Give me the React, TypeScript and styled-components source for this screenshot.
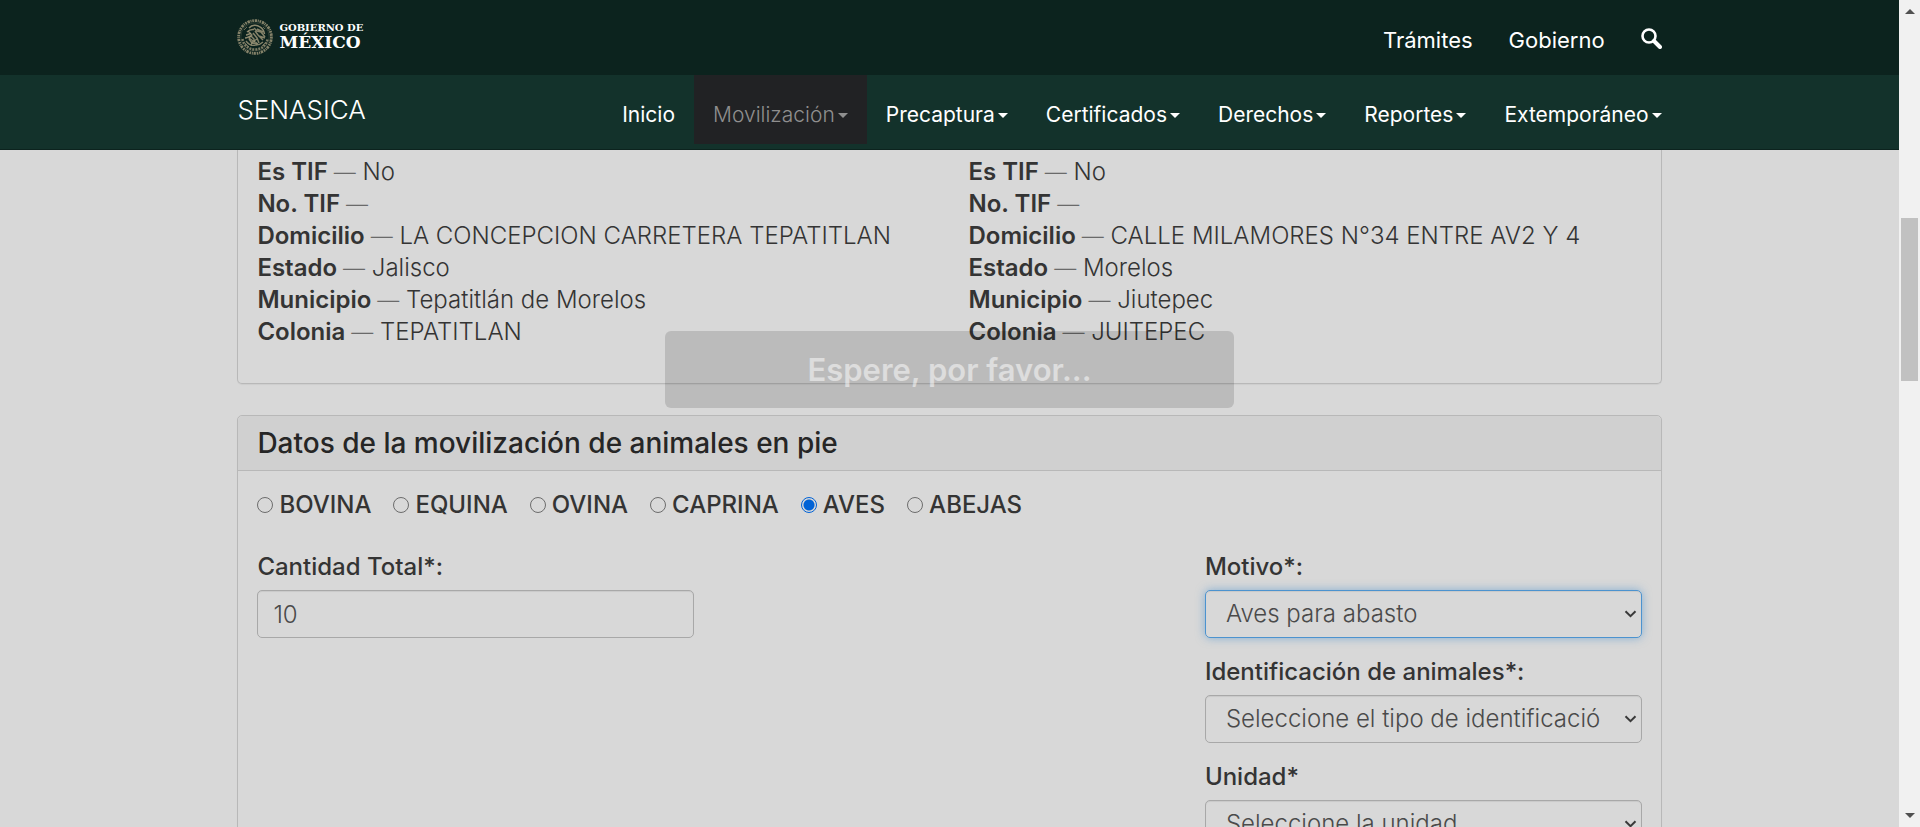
import React from "react";
import styled, { createGlobalStyle } from "styled-components";

const GlobalStyle = createGlobalStyle`
  *, *::before, *::after { box-sizing: border-box; }
  body {
    margin: 0;
    background: #d8d8d8;
    color: #343434;
    font: 300 24px/32px Inter, "Liberation Sans", sans-serif;
  }
`;

const Viewport = styled.div`
  display: flex;
  height: 100vh;
  overflow: hidden;
`;

const Page = styled.div`
  position: relative;
  flex: 1;
  min-width: 0;
  overflow: hidden;
`;

const Container = styled.div`
  width: 75%;
  max-width: 1425px;
  min-width: 1200px;
  margin: 0 auto;
  display: flex;
  justify-content: space-between;
`;

const GovBar = styled.header`
  background: #0c231e;
  height: 75px;
`;

const Brand = styled.a`
  display: flex;
  align-items: center;
  gap: 6px;
  height: 74px;
  color: #fff;
  text-decoration: none;
`;

const Wordmark = styled.span`
  display: flex;
  flex-direction: column;
  font-family: "DejaVu Serif", serif;
  font-weight: 700;
`;

const WordTop = styled.span`
  font-size: 10px;
  line-height: 10px;
`;

const WordBottom = styled.span`
  font-size: 17px;
  line-height: 18px;
`;

const GovLinks = styled.nav`
  display: flex;
  align-items: center;
  gap: 36px;
  height: 80px;
`;

const GovLink = styled.a`
  color: #fff;
  font-size: 22px;
  font-weight: 400;
  text-decoration: none;
`;

const SearchLink = styled.a`
  display: flex;
  color: #fff;
  padding-bottom: 4px;
`;

const NavBar = styled.div`
  background: #13322b;
  height: 75px;
  border-bottom: 1px solid #0c231e;
`;

const SiteName = styled.a`
  color: #fff;
  font-size: 26px;
  line-height: 70px;
  text-decoration: none;
`;

const Menu = styled.nav`
  display: flex;
  margin-right: -19px;
`;

const MenuLink = styled.a<{ $active?: boolean }>`
  display: flex;
  align-items: center;
  gap: 3px;
  height: 69px;
  padding: 11px 19px 0;
  background: ${(p) => (p.$active ? "#212224" : "transparent")};
  color: ${(p) => (p.$active ? "#8f8f8f" : "#fff")};
  font-size: 21px;
  font-weight: ${(p) => (p.$active ? 300 : 400)};
  text-decoration: none;
`;

const Caret = styled.span`
  border: 5px solid transparent;
  border-top-color: currentColor;
  border-bottom: 0;
`;

const Content = styled.main`
  width: 75%;
  max-width: 1425px;
  min-width: 1200px;
  margin: 0 auto;
  display: flex;
  flex-direction: column;
  gap: 31px;
`;

const Panel = styled.section<{ $continued?: boolean }>`
  border: 1px solid #b8b8b8;
  border-top-width: ${(p) => (p.$continued ? 0 : 1)}px;
  border-radius: ${(p) => (p.$continued ? "0 0 5px 5px" : "5px")};
  box-shadow: 0 1px 1px rgba(0, 0, 0, 0.05);
`;

const Columns = styled.div`
  display: grid;
  grid-template-columns: 1fr 1fr;
  gap: 38px;
  padding: 6px 19px 35px;
`;

const Details = styled.dl`
  margin: 0;
`;

const Detail = styled.div`
  display: flex;
  gap: 6px;
  white-space: nowrap;
`;

const Term = styled.dt`
  font-weight: 600;
`;

const Value = styled.dd`
  margin: 0;
`;

const Dash = styled.span`
  color: #6a6a6a;
  font-size: 22px;
`;

const PanelHeading = styled.h2`
  margin: 0;
  padding: 11px 19px;
  background: #d0d0d0;
  border-bottom: 1px solid #b8b8b8;
  border-radius: 5px 5px 0 0;
  color: #262626;
  font-size: 28px;
  font-weight: 500;
  line-height: 32px;
`;

const PanelBody = styled.form`
  padding: 18px 19px;
`;

const RadioRow = styled.div`
  display: flex;
  gap: 22px;
  margin-bottom: 30px;
`;

const RadioLabel = styled.label`
  display: flex;
  align-items: center;
  gap: 6px;
  font-weight: 500;
`;

const Radio = styled.input`
  appearance: none;
  width: 16px;
  height: 16px;
  margin: 0;
  border: 1px solid #6c6c6c;
  border-radius: 50%;
  &:checked {
    border-color: #0062d6;
    background: radial-gradient(circle, #0062d6 0 5px, transparent 6px);
  }
`;

const FieldGrid = styled.div`
  display: grid;
  grid-template-columns: repeat(3, 1fr);
  column-gap: 37px;
`;

const FieldColumn = styled.div<{ $column: number }>`
  grid-column: ${(p) => p.$column};
  display: flex;
  flex-direction: column;
  gap: 18px;
`;

const Field = styled.div`
  display: flex;
  flex-direction: column;
  gap: 7px;
`;

const FieldLabel = styled.label`
  font-weight: 500;
`;

const controlStyles = `
  width: 100%;
  height: 48px;
  border: 1px solid #a8a8a8;
  border-radius: 5px;
  background: transparent;
  box-shadow: inset 0 1px 1px rgba(0, 0, 0, 0.07);
  color: #4a4a4a;
  font: inherit;
  outline: none;
`;

const TextInput = styled.input`
  ${controlStyles}
  padding: 0 15px;
`;

const SelectWrap = styled.div`
  display: grid;
  align-items: center;
  > * { grid-area: 1 / 1; }
`;

const Select = styled.select<{ $focused?: boolean }>`
  ${controlStyles}
  appearance: none;
  padding: 0 40px 0 20px;
  ${(p) =>
    p.$focused &&
    `border-color: #4c93cf;
     box-shadow: inset 0 1px 1px rgba(0, 0, 0, 0.07), 0 0 10px rgba(76, 147, 207, 0.6);`}
`;

const Chevron = styled.svg`
  justify-self: end;
  margin-right: 5px;
  pointer-events: none;
`;

const Notice = styled.div`
  position: absolute;
  top: 40%;
  left: 35%;
  width: 30%;
  padding: 22px;
  border-radius: 6px;
  background: rgba(0, 0, 0, 0.134);
  color: rgba(255, 255, 255, 0.5);
  font-size: 31px;
  font-weight: 600;
  line-height: 33px;
  text-align: center;
`;

const ScrollTrack = styled.div`
  display: flex;
  flex-direction: column;
  width: 21px;
  padding: 9px 2px;
  background: #f1f1f1;
`;

const ScrollArrow = styled.span<{ $down?: boolean }>`
  align-self: center;
  border: 5px solid transparent;
  ${(p) =>
    p.$down
      ? "border-top-color: #505050; border-bottom: 0;"
      : "border-bottom-color: #505050; border-top: 0;"}
`;

const ScrollSpace = styled.span<{ $grow: number }>`
  flex: ${(p) => p.$grow} 1 0;
`;

const ScrollThumb = styled.span`
  flex: 163 1 0;
  background: #c1c1c1;
`;

const Seal = () => (
  <svg width="36" height="36" viewBox="0 0 36 36" fill="none" stroke="#a39a7c" aria-hidden="true">
    <circle cx="18" cy="18" r="16.4" strokeWidth="2.8" strokeDasharray="1.6 .9 2.4 .7 1 .8" opacity=".8" />
    <circle cx="18" cy="18" r="14.2" strokeWidth=".5" opacity=".4" />
    <path d="M5.5 20c1 6 6 10.500 12.500 10.500S29.500 26 30.500 20" strokeWidth="2.4" strokeDasharray="2 1" opacity=".75" />
    <path d="M12 9c3-3.500 8-3.500 11-1 3 1.500 4 4 4.500 7M10 13c2-2 4-3 7-2.500M9 16c2 0 3-1.500 5-1.500M8 19c3 0 4-2 6-2" strokeWidth="1.500" opacity=".85" />
    <path d="M17 9l3 3 4 1 4 5M18 12l3 4 5 5M16 14l4 5 2 5M14 17l3 3v5M20 10l6 3M22 17l6 2M12 20l3 4 5 1" strokeWidth="1.500" opacity=".8" />
    <path d="M9 22c3 4 7 5 10 4 3 0 5-1 7-3M11 12l4 4-3 3 4 3-2 4M20 20l-3 2 4 3" strokeWidth="1.300" opacity=".8" />
    <path d="M7 11l3-3M26 8l2 2M8 24l4 4M25 27l3-3" strokeWidth="1" opacity=".6" />
  </svg>
);

const SearchIcon = () => (
  <svg width="21" height="21" viewBox="0 0 21 21" fill="none" stroke="currentColor" aria-hidden="true">
    <circle cx="8" cy="8" r="6.500" strokeWidth="2.600" />
    <path d="M13 13l6 6" strokeWidth="4" strokeLinecap="round" />
  </svg>
);

const menu = [
  { label: "Inicio", plain: true },
  { label: "Movilización", active: true },
  { label: "Precaptura" },
  { label: "Certificados" },
  { label: "Derechos" },
  { label: "Reportes" },
  { label: "Extemporáneo" },
];

const origin = [
  ["Es TIF", "No"],
  ["No. TIF", ""],
  ["Domicilio", "LA CONCEPCION CARRETERA TEPATITLAN"],
  ["Estado", "Jalisco"],
  ["Municipio", "Tepatitlán de Morelos"],
  ["Colonia", "TEPATITLAN"],
];

const destination = [
  ["Es TIF", "No"],
  ["No. TIF", ""],
  ["Domicilio", "CALLE MILAMORES N°34 ENTRE AV2 Y 4"],
  ["Estado", "Morelos"],
  ["Municipio", "Jiutepec"],
  ["Colonia", "JUITEPEC"],
];

const species = ["BOVINA", "EQUINA", "OVINA", "CAPRINA", "AVES", "ABEJAS"];

const DetailList = ({ rows }: { rows: string[][] }) => (
  <Details>
    {rows.map(([term, value]) => (
      <Detail key={term}>
        <Term>{term}</Term>
        <Value>
          <Dash>—</Dash> {value}
        </Value>
      </Detail>
    ))}
  </Details>
);

const SelectField = ({ id, label, option, focused }: { id: string; label: string; option: string; focused?: boolean }) => (
  <Field>
    <FieldLabel htmlFor={id}>{label}</FieldLabel>
    <SelectWrap>
      <Select id={id} $focused={focused}>
        <option>{option}</option>
      </Select>
      <Chevron width="13" height="8" viewBox="0 0 13 8" fill="none" stroke="#3a3a3a" strokeWidth="2" aria-hidden="true">
        <path d="M1.500 1.200l5 5 5-5" />
      </Chevron>
    </SelectWrap>
  </Field>
);

export default function App() {
  return (
    <Viewport>
      <GlobalStyle />
      <Page>
        <GovBar>
          <Container>
            <Brand href="#">
              <Seal />
              <Wordmark>
                <WordTop>GOBIERNO DE</WordTop>
                <WordBottom>MÉXICO</WordBottom>
              </Wordmark>
            </Brand>
            <GovLinks>
              <GovLink href="#">Trámites</GovLink>
              <GovLink href="#">Gobierno</GovLink>
              <SearchLink href="#" aria-label="Buscar">
                <SearchIcon />
              </SearchLink>
            </GovLinks>
          </Container>
        </GovBar>
        <NavBar>
          <Container>
            <SiteName href="#">SENASICA</SiteName>
            <Menu>
              {menu.map((item) => (
                <MenuLink key={item.label} href="#" $active={item.active}>
                  {item.label}
                  {!item.plain && <Caret />}
                </MenuLink>
              ))}
            </Menu>
          </Container>
        </NavBar>
        <Content>
          <Panel $continued>
            <Columns>
              <DetailList rows={origin} />
              <DetailList rows={destination} />
            </Columns>
          </Panel>
          <Panel>
            <PanelHeading>Datos de la movilización de animales en pie</PanelHeading>
            <PanelBody>
              <RadioRow>
                {species.map((name) => (
                  <RadioLabel key={name}>
                    <Radio type="radio" name="especie" value={name} defaultChecked={name === "AVES"} />
                    {name}
                  </RadioLabel>
                ))}
              </RadioRow>
              <FieldGrid>
                <FieldColumn $column={1}>
                  <Field>
                    <FieldLabel htmlFor="cantidad">Cantidad Total*:</FieldLabel>
                    <TextInput id="cantidad" defaultValue="10" />
                  </Field>
                </FieldColumn>
                <FieldColumn $column={3}>
                  <SelectField id="motivo" label="Motivo*:" option="Aves para abasto" focused />
                  <SelectField id="identificacion" label="Identificación de animales*:" option="Seleccione el tipo de identificación" />
                  <SelectField id="unidad" label="Unidad*" option="Seleccione la unidad" />
                </FieldColumn>
              </FieldGrid>
            </PanelBody>
          </Panel>
        </Content>
        <Notice role="status">Espere, por favor...</Notice>
      </Page>
      <ScrollTrack aria-hidden="true">
        <ScrollArrow />
        <ScrollSpace $grow={204} />
        <ScrollThumb />
        <ScrollSpace $grow={432} />
        <ScrollArrow $down />
      </ScrollTrack>
    </Viewport>
  );
}
